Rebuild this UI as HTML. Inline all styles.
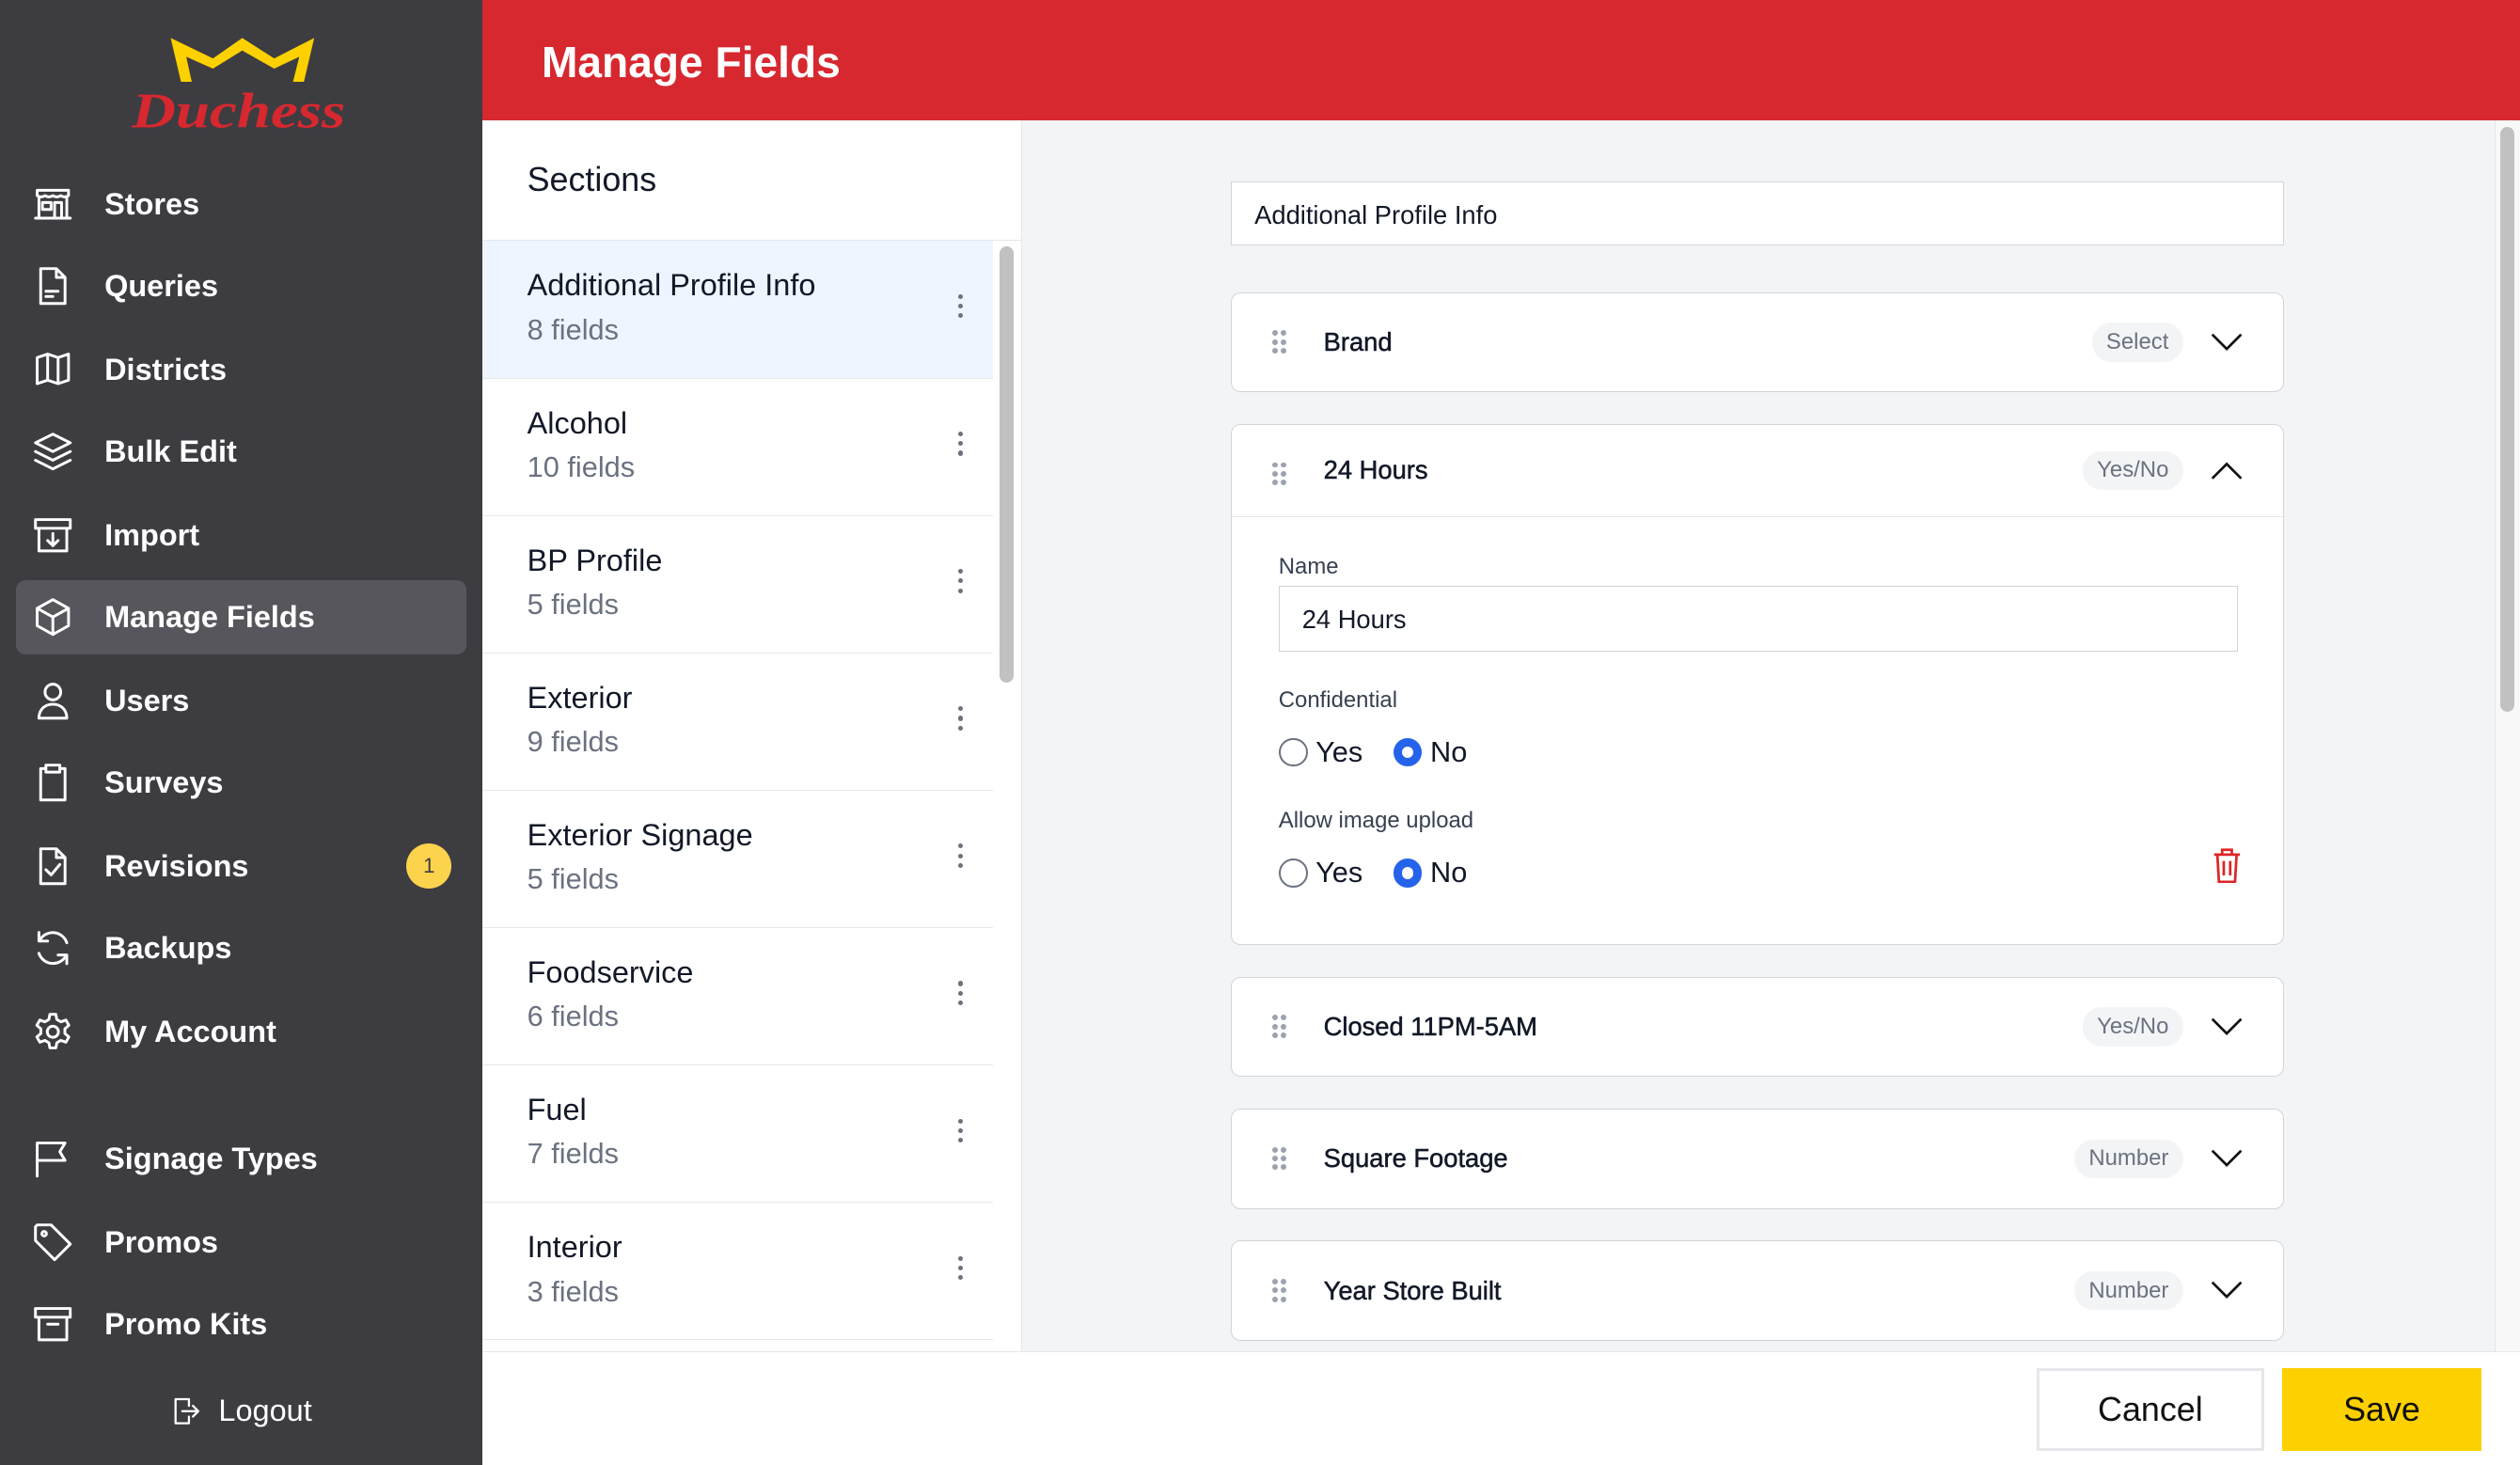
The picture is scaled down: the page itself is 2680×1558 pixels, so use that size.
<!DOCTYPE html>
<html><head><meta charset="utf-8"><style>
*{box-sizing:border-box;margin:0;padding:0}
html,body{width:2680px;height:1558px;overflow:hidden;background:#fff}
#w{width:1568px;height:912px;zoom:1.70918;position:relative;font-family:"Liberation Sans",sans-serif;color:#111827}
.sb{position:absolute;left:0;top:0;width:300px;height:912px;background:#3d3c41}
.ni{position:absolute;left:0;width:300px;height:46px;display:flex;align-items:center;color:#fff;font-size:19px;font-weight:600}
.ni svg{position:absolute;left:20px;width:26px;height:26px;fill:none;stroke:#fff;stroke-width:1.6;stroke-linecap:round;stroke-linejoin:round}
.ni span{position:absolute;left:65px}
.act{left:10px;width:280px;border-radius:6px;background:#57565c}
.act svg{left:10px}.act span{left:55px}
.hd{position:absolute;left:300px;top:0;width:1268px;height:75px;background:#d7282f;color:#fff;font-size:27px;font-weight:700;padding:23px 0 0 37px}
.sec{position:absolute;left:300px;top:75px;width:336px;height:766px;background:#fff;border-right:1px solid #e5e7eb}
.sech{height:75px;border-bottom:1px solid #e5e7eb;font-size:21px;font-weight:500;padding:25px 0 0 28px}
.si{position:relative;width:318px;height:85.5px;border-bottom:1px solid #e5e7eb;padding:17px 0 0 28px}
.si b{display:block;font-weight:500;font-size:19px;color:#111827}
.si i{display:block;font-style:normal;font-size:18px;color:#6b7280;margin-top:6px}
.si .d{position:absolute;right:18px;top:33px;width:4px}
.d s{display:block;width:3px;height:3px;border-radius:50%;background:#6b7280;margin-bottom:3px}
.main{position:absolute;left:636px;top:75px;width:916px;height:766px;background:#f3f4f6}
.card{position:absolute;left:130px;width:655px;background:#fff;border:1px solid #d1d5db;border-radius:6px}
.row{position:relative;height:61px;display:flex;align-items:center;font-size:16px;font-weight:500}
.row .t{position:absolute;left:57px;-webkit-text-stroke:0.3px #111827}
.grip{position:absolute;left:25px;top:23px;width:9px;height:15px}
.grip s{position:absolute;width:3.5px;height:3.5px;border-radius:50%;background:#9ca3af}
.pill{position:absolute;right:62px;background:#f3f4f6;color:#6b7280;font-size:14px;font-weight:400;padding:4px 9px;border-radius:12px}
.chev{position:absolute;right:25px;width:20px;height:12px}
.lbl{font-size:14px;color:#374151;position:absolute;left:29px}
.rad{position:absolute;left:29px;display:flex;align-items:center;font-size:18px}
.rc{width:18px;height:18px;border-radius:50%;border:1.5px solid #6b7280;display:inline-block;margin-right:5px}
.rs{width:18px;height:18px;border-radius:50%;border:5.5px solid #2563eb;background:#fff;display:inline-block;margin:0 5px 0 19px}
.ft{position:absolute;left:300px;top:841px;width:1268px;height:71px;background:#fff;border-top:1px solid #e5e7eb}
.btn{position:absolute;top:10px;height:51px;display:flex;align-items:center;justify-content:center;font-size:21px}
</style></head><body><div id="w">
<div class="sb">
<svg style="position:absolute;left:82px;top:22px" width="135" height="62" viewBox="0 0 135 62">
<polygon points="24.3,1.4 50.6,14.1 68.8,1.4 88.7,14.1 113.6,1.4 107.2,28.7 100.4,28.7 104.3,13.1 88.7,20.5 68.8,9.2 50.6,20.5 34,13.1 37.4,28.7 30.7,28.7" fill="#fdd000"/>
<text x="0" y="57" textLength="133" lengthAdjust="spacingAndGlyphs" font-family="Liberation Serif,serif" font-style="italic" font-weight="700" font-size="31" fill="#d7282f">Duchess</text>
</svg>
<div class="ni" style="top:104px"><svg viewBox="0 0 24 24"><path d="M3 4h18v3c-1.5 1-3 1-4.5 0-1.5 1-3 1-4.5 0-1.5 1-3 1-4.5 0-1.5 1-3 1-4.5 0z M4 8v12h16V8 M6 11h5v4H6z M13 11h4v9h-4z M2 20h20"/></svg><span>Stores</span></div>
<div class="ni" style="top:155px"><svg viewBox="0 0 24 24"><path d="M5 2h9l5 5v15H5z M14 2v5h5 M8 15h7 M8 18h4"/></svg><span>Queries</span></div>
<div class="ni" style="top:207px"><svg viewBox="0 0 24 24"><path d="M3 5l6-2 6 2 6-2v15l-6 2-6-2-6 2z M9 3v15 M15 5v15"/></svg><span>Districts</span></div>
<div class="ni" style="top:258px"><svg viewBox="0 0 24 24"><path d="M12 2l10 5-10 5L2 7z M2 12l10 5 10-5 M2 17l10 5 10-5"/></svg><span>Bulk Edit</span></div>
<div class="ni" style="top:310px"><svg viewBox="0 0 24 24"><path d="M2 3h20v5H2z M4 8v13h16V8 M12 11v7 M9 15l3 3 3-3"/></svg><span>Import</span></div>
<div class="ni act" style="top:361px"><svg viewBox="0 0 24 24"><path d="M12 2l9 5v10l-9 5-9-5V7z M3 7l9 5 9-5 M12 12v10"/></svg><span>Manage Fields</span></div>
<div class="ni" style="top:413px"><svg viewBox="0 0 24 24"><circle cx="12" cy="7" r="4.5"/><path d="M4 22c0-5 3.5-8 8-8s8 3 8 8z"/></svg><span>Users</span></div>
<div class="ni" style="top:464px"><svg viewBox="0 0 24 24"><path d="M8 4H5v18h14V4h-3 M8 2h8v4H8z"/></svg><span>Surveys</span></div>
<div class="ni" style="top:516px"><svg viewBox="0 0 24 24"><path d="M5 2h9l5 5v15H5z M14 2v5h5 M8 14l3 3 5-6"/></svg><span>Revisions</span><div style="position:absolute;left:253px;top:9px;width:28px;height:28px;border-radius:50%;background:#fcd34d;color:#3d3c41;font-size:13px;font-weight:400;text-align:center;line-height:28px">1</div></div>
<div class="ni" style="top:567px"><svg viewBox="0 0 24 24"><path d="M20 9A8.5 8.5 0 0 0 4.5 7.5 M4 3v5h5 M4 15a8.5 8.5 0 0 0 15.5 1.5 M20 21v-5h-5"/></svg><span>Backups</span></div>
<div class="ni" style="top:619px"><svg viewBox="0 0 24 24"><circle cx="12" cy="12" r="3.2"/><path d="M10.3 2h3.4l.6 3 2.3 1.3 2.9-1 1.7 3-2.3 2v2.7l2.3 2-1.7 3-2.9-1-2.3 1.3-.6 3h-3.4l-.6-3-2.3-1.3-2.9 1-1.7-3 2.3-2v-2.7l-2.3-2 1.7-3 2.9 1 2.3-1.3z"/></svg><span>My Account</span></div>
<div class="ni" style="top:698px"><svg viewBox="0 0 24 24"><path d="M3 22V3 M3 3h16l-3 5 3 5H3"/></svg><span>Signage Types</span></div>
<div class="ni" style="top:750px"><svg viewBox="0 0 24 24"><path d="M2 3v8l11 11 9-9L11 2H3z"/><circle cx="7" cy="7" r="1.3"/></svg><span>Promos</span></div>
<div class="ni" style="top:801px"><svg viewBox="0 0 24 24"><path d="M2 3h20v5H2z M4 8v13h16V8 M9 12h6"/></svg><span>Promo Kits</span></div>
<div style="position:absolute;left:106px;top:867px;color:#fff;font-size:19px;display:flex;align-items:center"><svg width="20" height="22" viewBox="0 0 24 24" fill="none" stroke="#fff" stroke-width="1.6" stroke-linecap="round" stroke-linejoin="round"><path d="M14 8V3H4v18h10v-5 M9 12h12 M17 8l4 4-4 4"/></svg><span style="margin-left:10px">Logout</span></div>
</div>
<div class="hd">Manage Fields</div>
<div class="sec"><div class="sech">Sections</div>
<div class="si" style="background:#eef5fe"><b>Additional Profile Info</b><i>8 fields</i><div class="d"><s></s><s></s><s></s></div></div>
<div class="si"><b>Alcohol</b><i>10 fields</i><div class="d"><s></s><s></s><s></s></div></div>
<div class="si"><b>BP Profile</b><i>5 fields</i><div class="d"><s></s><s></s><s></s></div></div>
<div class="si"><b>Exterior</b><i>9 fields</i><div class="d"><s></s><s></s><s></s></div></div>
<div class="si"><b>Exterior Signage</b><i>5 fields</i><div class="d"><s></s><s></s><s></s></div></div>
<div class="si"><b>Foodservice</b><i>6 fields</i><div class="d"><s></s><s></s><s></s></div></div>
<div class="si"><b>Fuel</b><i>7 fields</i><div class="d"><s></s><s></s><s></s></div></div>
<div class="si"><b>Interior</b><i>3 fields</i><div class="d"><s></s><s></s><s></s></div></div>
<div style="position:absolute;left:322px;top:78px;width:9px;height:272px;border-radius:5px;background:#c1c1c1"></div>
</div>
<div class="main">
<div style="position:absolute;left:130px;top:38px;width:655px;height:40px;background:#fff;border:1px solid #d1d5db;font-size:16px;padding:11px 14px">Additional Profile Info</div>
<div class="card" style="top:107px"><div class="row"><div class="grip"><s style="left:0;top:0"></s><s style="left:5.5px;top:0"></s><s style="left:0;top:5.5px"></s><s style="left:5.5px;top:5.5px"></s><s style="left:0;top:11px"></s><s style="left:5.5px;top:11px"></s></div><span class="t">Brand</span><span class="pill">Select</span><svg class="chev" viewBox="0 0 20 12"><path d="M1 1l9 9 9-9" fill="none" stroke="#111" stroke-width="1.6"/></svg></div></div>
<div class="card" style="top:189px;height:324px"><div class="row" style="border-bottom:1px solid #e5e7eb;height:57px"><div class="grip"><s style="left:0;top:0"></s><s style="left:5.5px;top:0"></s><s style="left:0;top:5.5px"></s><s style="left:5.5px;top:5.5px"></s><s style="left:0;top:11px"></s><s style="left:5.5px;top:11px"></s></div><span class="t">24 Hours</span><span class="pill">Yes/No</span><svg class="chev" viewBox="0 0 20 12"><path d="M1 11l9-9 9 9" fill="none" stroke="#111" stroke-width="1.6"/></svg></div>
<div class="lbl" style="top:80px">Name</div>
<div style="position:absolute;left:29px;top:100px;width:597px;height:41px;border:1px solid #d1d5db;font-size:16px;padding:11px 14px">24 Hours</div>
<div class="lbl" style="top:163px">Confidential</div>
<div class="rad" style="top:193px"><span class="rc"></span>Yes<span class="rs"></span>No</div>
<div class="lbl" style="top:238px">Allow image upload</div>
<div class="rad" style="top:268px"><span class="rc"></span>Yes<span class="rs"></span>No</div>
<svg style="position:absolute;right:26px;top:263px" width="18" height="22" viewBox="0 0 18 22" fill="none" stroke="#dc2626" stroke-width="1.6"><path d="M1 4h16 M6 4V1h6v3 M3 4l1 17h10l1-17 M7 8v9 M11 8v9"/></svg>
</div>
<div class="card" style="top:533px"><div class="row"><div class="grip"><s style="left:0;top:0"></s><s style="left:5.5px;top:0"></s><s style="left:0;top:5.5px"></s><s style="left:5.5px;top:5.5px"></s><s style="left:0;top:11px"></s><s style="left:5.5px;top:11px"></s></div><span class="t">Closed 11PM-5AM</span><span class="pill">Yes/No</span><svg class="chev" viewBox="0 0 20 12"><path d="M1 1l9 9 9-9" fill="none" stroke="#111" stroke-width="1.6"/></svg></div></div>
<div class="card" style="top:615px"><div class="row"><div class="grip"><s style="left:0;top:0"></s><s style="left:5.5px;top:0"></s><s style="left:0;top:5.5px"></s><s style="left:5.5px;top:5.5px"></s><s style="left:0;top:11px"></s><s style="left:5.5px;top:11px"></s></div><span class="t">Square Footage</span><span class="pill">Number</span><svg class="chev" viewBox="0 0 20 12"><path d="M1 1l9 9 9-9" fill="none" stroke="#111" stroke-width="1.6"/></svg></div></div>
<div class="card" style="top:697px"><div class="row"><div class="grip"><s style="left:0;top:0"></s><s style="left:5.5px;top:0"></s><s style="left:0;top:5.5px"></s><s style="left:5.5px;top:5.5px"></s><s style="left:0;top:11px"></s><s style="left:5.5px;top:11px"></s></div><span class="t">Year Store Built</span><span class="pill">Number</span><svg class="chev" viewBox="0 0 20 12"><path d="M1 1l9 9 9-9" fill="none" stroke="#111" stroke-width="1.6"/></svg></div></div>
</div>
<div style="position:absolute;left:1552px;top:75px;width:16px;height:766px;background:#f8f8f8;border-left:1px solid #e5e7eb"><div style="position:absolute;left:3px;top:4px;width:9px;height:364px;border-radius:5px;background:#c1c1c1"></div></div>
<div class="ft">
<div class="btn" style="left:967px;width:142px;border:2px solid #e5e7eb;background:#fff;color:#111">Cancel</div>
<div class="btn" style="left:1120px;width:124px;background:#fdd000;color:#111">Save</div>
</div>
</div></body></html>
